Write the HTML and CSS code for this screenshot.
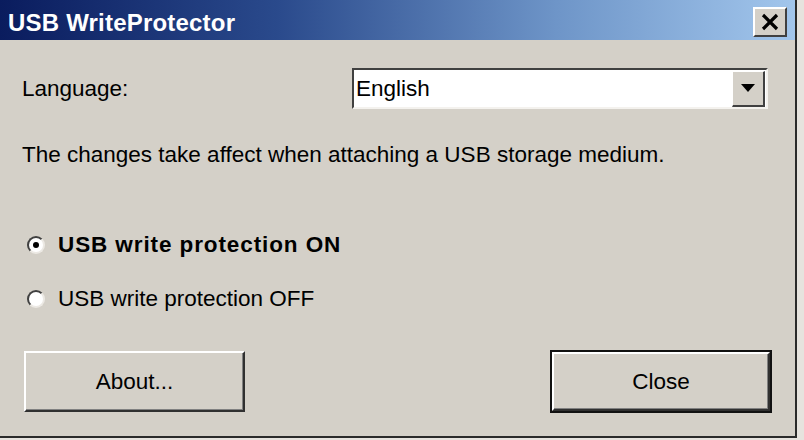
FILE: index.html
```html
<!DOCTYPE html>
<html>
<head>
<meta charset="utf-8">
<link rel="stylesheet" href="styles.css">
</head>
<body>
<div class="window">
  <div class="titlebar">
    <span class="title">USB WriteProtector</span>
    <span class="xbtn"><svg width="20" height="18" viewBox="0 0 20 18"><path d="M3 2 L17 16 M17 2 L3 16" stroke="#000" stroke-width="3.2" fill="none"/></svg></span>
  </div>
  <div class="content">
    <div class="langrow">
      <span class="label">Language:</span>
      <div class="combo">
        <span class="combo-text">English</span>
        <span class="combo-btn"><svg width="14" height="8" viewBox="0 0 14 8"><path d="M0 0 H14 L7 8 Z" fill="#000"/></svg></span>
      </div>
    </div>
    <p class="note">The changes take affect when attaching a USB storage medium.</p>
    <div class="radio on"><span class="dot"></span><span class="rtext">USB write protection ON</span></div>
    <div class="radio"><span class="dot"></span><span class="rtext">USB write protection OFF</span></div>
    <div class="buttons">
      <div class="btn">About...</div>
      <div class="btn default">Close</div>
    </div>
  </div>
</div>
</body>
</html>
```
FILE: styles.css
```css
html, body {
  margin: 0;
  padding: 0;
  background: #e6e3de;
  width: 804px;
  height: 440px;
  overflow: hidden;
}
.window {
  width: 795px;
  height: 436px;
  background: #d4d0c8;
  border-right: 2px solid #2a2a2a;
  border-bottom: 2px solid #2a2a2a;
  font-family: "Liberation Sans", Arial, sans-serif;
  color: #000;
  display: flex;
  flex-direction: column;
}
.titlebar {
  height: 40px;
  background: linear-gradient(to right, #0a1c5e 0%, #2a4a8c 35%, #6e95c8 70%, #a2c6ec 100%);
  display: flex;
  align-items: flex-start;
  justify-content: space-between;
}
.title {
  color: #fff;
  font-weight: bold;
  font-size: 24px;
  margin-left: 8px;
  margin-top: 9px;
  letter-spacing: 0.2px;
}
.xbtn {
  width: 30px;
  height: 26px;
  margin-top: 7px;
  margin-right: 8px;
  background: #d4d0c8;
  border-top: 2px solid #fff;
  border-left: 2px solid #fff;
  border-right: 2px solid #404040;
  border-bottom: 2px solid #404040;
  display: flex;
  align-items: center;
  justify-content: center;
}
.content {
  padding: 0 0 0 22px;
  display: flex;
  flex-direction: column;
}
.langrow {
  display: flex;
  align-items: center;
  margin-top: 28px;
  height: 41px;
}
.label {
  font-size: 22.5px;
  width: 330px;
}
.combo {
  width: 412px;
  height: 37px;
  background: #fff;
  border-top: 2px solid #404040;
  border-left: 2px solid #404040;
  border-right: 2px solid #f4f2ee;
  border-bottom: 2px solid #f4f2ee;
  display: flex;
  align-items: center;
  justify-content: space-between;
}
.combo-text {
  font-size: 22.5px;
  margin-left: 2px;
}
.combo-btn {
  width: 30px;
  height: 33px;
  margin-right: 1px;
  background: #d4d0c8;
  border-top: 1px solid #fff;
  border-left: 1px solid #fff;
  border-right: 2px solid #404040;
  border-bottom: 2px solid #404040;
  display: flex;
  align-items: center;
  justify-content: center;
}
.note {
  font-size: 22.5px;
  margin: 33px 0 0 0;
  line-height: 26px;
}
.radio {
  display: flex;
  align-items: center;
  height: 26px;
  font-size: 22.5px;
}
.radio.on {
  margin-top: 64px;
  font-weight: bold;
  letter-spacing: 0.9px;
}
.radio + .radio {
  margin-top: 28px;
}
.dot {
  width: 14px;
  height: 14px;
  border-radius: 50%;
  background: #fff;
  border: 2px solid;
  border-color: #404040 #ece9e4 #ece9e4 #404040;
  margin-left: 5px;
  margin-right: 13px;
  display: flex;
  align-items: center;
  justify-content: center;
}
.radio.on .dot::after {
  content: "";
  width: 6px;
  height: 6px;
  border-radius: 50%;
  background: #000;
}
.buttons {
  display: flex;
  justify-content: space-between;
  width: 748px;
  margin-top: 39px;
  margin-left: 2px;
}
.btn {
  width: 217px;
  height: 57px;
  background: #d4d0c8;
  border-top: 2px solid #fff;
  border-left: 2px solid #fff;
  border-right: 2px solid #303030;
  border-bottom: 2px solid #303030;
  box-shadow: inset -1px -1px 0 #808080;
  display: flex;
  align-items: center;
  justify-content: center;
  font-size: 22.5px;
}
.btn.default {
  width: 214px;
  height: 55px;
  outline: 2px solid #111;
  outline-offset: 0;
  margin-top: 1px;
  margin-right: 2px;
}
```
